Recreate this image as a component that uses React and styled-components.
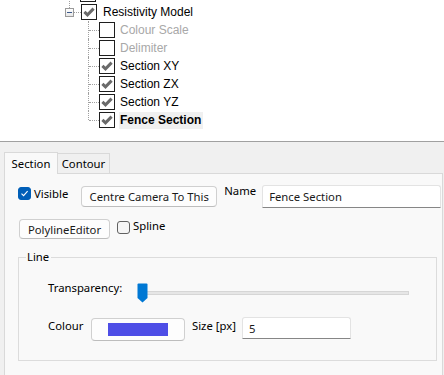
import React from 'react';
import styled, {createGlobalStyle} from 'styled-components';

const GlobalStyle = createGlobalStyle`
  html, body {
    margin: 0;
    padding: 0;
    background: #f0f0f0;
  }
  * {
    box-sizing: border-box;
  }
`;

const Page = styled.div`
  width: 444px;
  height: 375px;
  overflow: hidden;
  background: #f0f0f0;
`;

/* ---------- tree ---------- */

const TreePane = styled.div`
  height: 142px;
  background: #ffffff;
  border-bottom: 1px solid #a0a0a0;
  overflow: hidden;
  font-family: "Liberation Sans", Arial, sans-serif;
  font-size: 12px;
  color: #000;
`;

const TreeList = styled.div`
  margin-top: -15px;
`;

const TreeRow = styled.div`
  height: 18px;
  display: flex;
  align-items: center;
  padding-left: ${p => p.$indent}px;
`;

const Expander = styled.div`
  position: relative;
  width: 9px;
  height: 9px;
  margin-top: 1px;
  border: 1px solid #9a9a9a;
  background: linear-gradient(#ffffff, #e6e6e6);

  &::before {
    content: '';
    position: absolute;
    left: 3px;
    top: -10px;
    height: 9px;
    border-left: 1px dotted #a0a0a0;
  }

  &::after {
    content: '';
    position: absolute;
    left: 1px;
    top: 3px;
    width: 5px;
    height: 1px;
    background: #3c5a8c;
  }
`;

const Stub = styled.div`
  width: 7px;
  height: 1px;
  border-top: 1px dotted #a0a0a0;
`;

const Branch = styled.div`
  position: relative;
  align-self: stretch;
  width: 11px;

  &::before {
    content: '';
    position: absolute;
    left: 0;
    top: 0;
    height: ${p => (p.$last ? '9px' : '18px')};
    border-left: 1px dotted #a0a0a0;
  }

  &::after {
    content: '';
    position: absolute;
    left: 1px;
    top: 9px;
    width: 10px;
    border-top: 1px dotted #a0a0a0;
  }
`;

const TreeBox = styled.div`
  width: 16px;
  height: 16px;
  border: 1px solid #1e1e1e;
  background: #fff;
  display: flex;
  align-items: center;
  justify-content: center;
  flex-shrink: 0;
`;

const TreeLabel = styled.span`
  margin-left: ${p => p.$gap || 5}px;
  padding: 1px 2px 2px 1px;
  line-height: 14px;
  color: ${p => (p.$disabled ? '#a8a8a8' : '#000')};
  font-weight: ${p => (p.$bold ? 'bold' : 'normal')};
  background: ${p => (p.$selected ? '#f0f0f0' : 'transparent')};
`;

const TreeCheck = () => (
  <svg width="12" height="12" viewBox="0 0 12 12">
    <path d="M1.4 5.8 L4.5 8.8 L10.6 2.6" fill="none" stroke="#6a6a6a" strokeWidth="3" strokeLinejoin="miter" />
  </svg>
);

const children = [
  {label: 'Colour Scale', checked: false, disabled: true},
  {label: 'Delimiter', checked: false, disabled: true},
  {label: 'Section XY', checked: true},
  {label: 'Section ZX', checked: true},
  {label: 'Section YZ', checked: true},
  {label: 'Fence Section', checked: true, bold: true, selected: true},
];

/* ---------- tabs ---------- */

const Lower = styled.div`
  padding-top: 10px;
  font-family: "Noto Sans", "Segoe UI", sans-serif;
  font-size: 11.3px;
  color: #000;
`;

const TabStrip = styled.div`
  display: flex;
  align-items: flex-end;
  height: 21px;
  padding-left: 4px;
`;

const Tab = styled.div`
  position: relative;
  z-index: ${p => (p.$active ? 1 : 0)};
  height: ${p => (p.$active ? 22 : 20)}px;
  margin-bottom: ${p => (p.$active ? -1 : 0)}px;
  width: ${p => p.$w}px;
  padding-top: ${p => (p.$active ? 2 : 1)}px;
  text-align: center;
  line-height: 17px;
  border: 1px solid #d9d9d9;
  border-bottom: none;
  border-left: ${p => (p.$active ? '1px solid #d9d9d9' : 'none')};
  background: ${p => (p.$active ? '#f9f9f9' : '#f0f0f0')};
`;

const Panel = styled.div`
  margin-left: 4px;
  margin-right: 1px;
  height: 210px;
  border: 1px solid #d9d9d9;
  border-bottom: none;
  background: #f9f9f9;
  padding: 12px 0 0 13px;
`;

const Row = styled.div`
  display: flex;
  align-items: flex-start;
  margin-top: ${p => p.$mt || 0}px;
`;

const CheckWrap = styled.label`
  display: flex;
  align-items: flex-start;
  margin-top: ${p => p.$mt || 0}px;
  margin-left: ${p => p.$ml || 0}px;
  line-height: 16px;
`;

const Box = styled.span`
  width: 13px;
  height: 13px;
  margin-top: ${p => p.$mt || 1}px;
  margin-right: 3px;
  border-radius: 3px;
  display: flex;
  align-items: center;
  justify-content: center;
  background: ${p => (p.$checked ? '#005fb8' : '#f5f5f5')};
  border: 1px solid ${p => (p.$checked ? '#005fb8' : '#616161')};
`;

const Button = styled.button`
  height: ${p => p.$h || 21}px;
  width: ${p => p.$w}px;
  margin-left: ${p => p.$ml || 0}px;
  margin-top: ${p => p.$mt || 0}px;
  padding: 0;
  font: inherit;
  color: #1a1a1a;
  background: #fdfdfd;
  border: 1px solid #d0d0d0;
  border-bottom-color: #bdbdbd;
  border-radius: 4px;
  display: flex;
  align-items: center;
  justify-content: center;
`;

const Label = styled.span`
  line-height: 16px;
  width: ${p => (p.$w ? `${p.$w}px` : 'auto')};
  margin-left: ${p => p.$ml || 0}px;
  margin-top: ${p => p.$mt || 0}px;
  white-space: nowrap;
`;

const TextBox = styled.div`
  width: ${p => p.$w}px;
  height: ${p => p.$h || 22}px;
  margin-left: ${p => p.$ml || 0}px;
  margin-top: ${p => p.$mt || 0}px;
  background: #fff;
  border: 1px solid #e3e3e3;
  border-bottom: 1px solid #868686;
  border-radius: 3px 3px 0 0;
  padding-left: 6px;
  display: flex;
  align-items: center;
  color: #1a1a1a;
`;

/* ---------- group ---------- */

const Group = styled.fieldset`
  margin: 10px 5px 0 0;
  padding: 0 0 19px 29px;
  border: 1px solid #dcdcdc;
  min-width: 0;
`;

const Legend = styled.legend`
  margin-left: -22px;
  padding: 0 2px 0 1px;
  line-height: 16px;
`;

const SliderRow = styled(Row)`
  margin-top: 15px;
`;

const Slider = styled.div`
  position: relative;
  width: 274px;
  height: 20px;
  margin-top: 3px;
  display: flex;
  align-items: center;
  padding: 0 2px 0 3px;
`;

const Track = styled.div`
  flex: 1;
  height: 4px;
  margin-top: -1px;
  background: #e6e6e6;
  border: 1px solid #d6d6d6;
`;

const Thumb = styled.svg`
  position: absolute;
  left: ${p => p.$pos}px;
  top: 0;
`;

const Swatch = styled.div`
  width: 60px;
  height: 13px;
  background: ${p => p.$color};
`;

export default function App() {
  return (
    <Page>
      <GlobalStyle />
      <TreePane>
        <TreeList>
          <TreeRow $indent={80}>
            <TreeBox><TreeCheck /></TreeBox>
          </TreeRow>
          <TreeRow $indent={65}>
            <Expander />
            <Stub />
            <TreeBox><TreeCheck /></TreeBox>
            <TreeLabel $gap={5}>Resistivity Model</TreeLabel>
          </TreeRow>
          {children.map((c, i) => (
            <TreeRow key={c.label} $indent={88}>
              <Branch $last={i === children.length - 1} />
              <TreeBox>{c.checked && <TreeCheck />}</TreeBox>
              <TreeLabel $gap={4} $disabled={c.disabled} $bold={c.bold} $selected={c.selected}>
                {c.label}
              </TreeLabel>
            </TreeRow>
          ))}
        </TreeList>
      </TreePane>

      <Lower>
        <TabStrip>
          <Tab $active $w={54}>Section</Tab>
          <Tab $w={52}>Contour</Tab>
        </TabStrip>
        <Panel>
          <Row>
            <CheckWrap $mt={0}>
              <Box $checked>
                <svg width="9" height="9" viewBox="0 0 9 9">
                  <path d="M1.5 4.6 L3.6 6.6 L7.6 2.2" fill="none" stroke="#fff" strokeWidth="1.1" />
                </svg>
              </Box>
              <span>Visible</span>
            </CheckWrap>
            <Button $w={136} $ml={13} $h={21}>Centre Camera To This</Button>
            <Label $ml={7} $mt={-3}>Name</Label>
            <TextBox $w={179} $h={23} $ml={6} $mt={-1}>Fence Section</TextBox>
          </Row>
          <Row $mt={11}>
            <Button $w={91} $h={20} $ml={1}>PolylineEditor</Button>
            <CheckWrap $ml={7} $mt={-1}>
              <Box $mt={3}></Box>
              <span>Spline</span>
            </CheckWrap>
          </Row>

          <Group>
            <Legend>Line</Legend>
            <SliderRow>
              <Label $w={89}>Transparency:</Label>
              <Slider>
                <Track />
                <Thumb $pos={0} width="11" height="20" viewBox="0 0 11 20">
                  <path d="M0.5 1.5 Q0.5 0.5 1.5 0.5 L9.5 0.5 Q10.5 0.5 10.5 1.5 L10.5 15 L5.5 19.5 L0.5 15 Z" fill="#0078d4" />
                </Thumb>
              </Slider>
            </SliderRow>
            <Row $mt={14}>
              <Label $w={43} $mt={1}>Colour</Label>
              <Button $w={94} $h={23} $mt={1}>
                <Swatch $color="#4e4ee6" />
              </Button>
              <Label $ml={7} $mt={1}>Size [px]</Label>
              <TextBox $w={109} $h={22} $ml={6}>5</TextBox>
            </Row>
          </Group>
        </Panel>
      </Lower>
    </Page>
  );
}
